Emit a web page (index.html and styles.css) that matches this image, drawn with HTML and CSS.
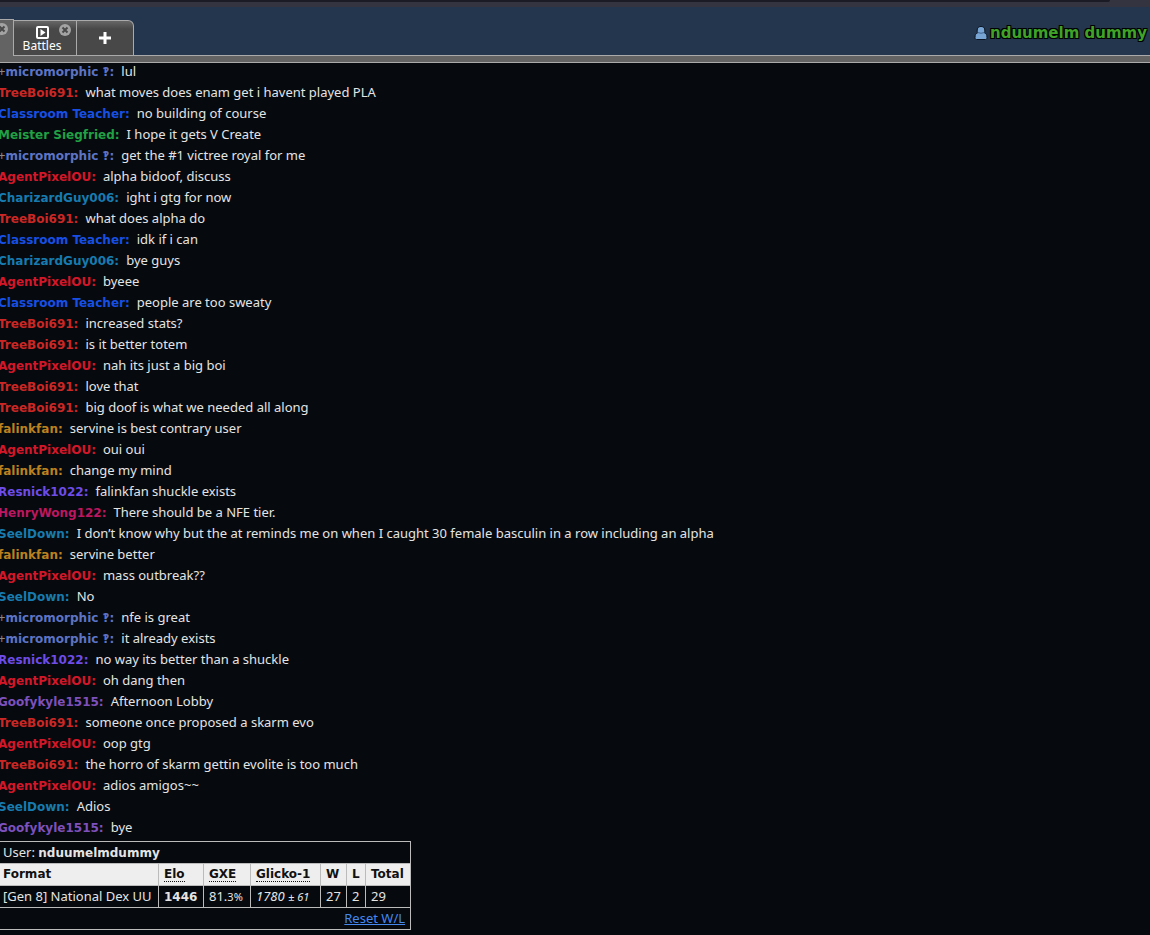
FILE: index.html
```html
<!DOCTYPE html>
<html lang="en">
<head>
<meta charset="utf-8">
<title>Lobby</title>
<link rel="stylesheet" href="styles.css">
</head>
<body>
<div class="browser-edge"></div>
<header class="header">
  <nav class="tabs">
    <div class="tab tab-current">
      <button class="close" aria-label="Close"><svg viewBox="0 0 12 12" width="12" height="12"><circle cx="6" cy="6" r="6" fill="#a3a3a3"/><path d="M3.5 3.5l5 5M8.5 3.5l-5 5" stroke="#494949" stroke-width="2"/></svg></button>
    </div>
    <div class="tab tab-battles">
      <a class="tab-link" href="#battles">
        <svg viewBox="0 0 13 13" width="13" height="13"><rect x="1" y="1" width="11" height="11" rx="1" fill="none" stroke="#fff" stroke-width="2"/><path d="M4.500 3v7l5-3.500z" fill="#fff"/></svg>
        <span>Battles</span>
      </a>
      <button class="close" aria-label="Close Battles"><svg viewBox="0 0 12 12" width="12" height="12"><circle cx="6" cy="6" r="6" fill="#a3a3a3"/><path d="M3.500 3.500l5 5M8.500 3.500l-5 5" stroke="#494949" stroke-width="2"/></svg></button>
    </div>
    <button class="tab tab-add" aria-label="New tab"><svg viewBox="0 0 12 12" width="12" height="12"><path d="M6 0v12M0 6h12" stroke="#fff" stroke-width="3"/></svg></button>
  </nav>
  <a class="user" href="#user">
    <svg viewBox="0 0 14 16" width="14" height="16"><path d="M1 12.500C1 9.500 2 8.500 3.500 8 2.500 3.500 4 1.500 7 1.500S11.500 3.500 10.500 8C12 8.500 13 9.500 13 12.500c0 1.500-.5 2-1.500 2h-9c-1 0-1.500-.5-1.500-2z" fill="#78a4d4" stroke="#0b1420"/><path d="M3.500 7.500q3.500 1.500 7 0" fill="none" stroke="#3f638e"/></svg>
    <span>nduumelm dummy</span>
  </a>
</header>
<main class="log">
  <div class="chat micro"><small>+</small><b>micromorphic ‽:</b><span>lul</span></div>
  <div class="chat tree"><b>TreeBoi691:</b><span>what moves does enam get i havent played PLA</span></div>
  <div class="chat teacher"><b>Classroom Teacher:</b><span>no building of course</span></div>
  <div class="chat meister"><b>Meister Siegfried:</b><span>I hope it gets V Create</span></div>
  <div class="chat micro"><small>+</small><b>micromorphic ‽:</b><span>get the #1 victree royal for me</span></div>
  <div class="chat agent"><b>AgentPixelOU:</b><span>alpha bidoof, discuss</span></div>
  <div class="chat seel"><b>CharizardGuy006:</b><span>ight i gtg for now</span></div>
  <div class="chat tree"><b>TreeBoi691:</b><span>what does alpha do</span></div>
  <div class="chat teacher"><b>Classroom Teacher:</b><span>idk if i can</span></div>
  <div class="chat seel"><b>CharizardGuy006:</b><span>bye guys</span></div>
  <div class="chat agent"><b>AgentPixelOU:</b><span>byeee</span></div>
  <div class="chat teacher"><b>Classroom Teacher:</b><span>people are too sweaty</span></div>
  <div class="chat tree"><b>TreeBoi691:</b><span>increased stats?</span></div>
  <div class="chat tree"><b>TreeBoi691:</b><span>is it better totem</span></div>
  <div class="chat agent"><b>AgentPixelOU:</b><span>nah its just a big boi</span></div>
  <div class="chat tree"><b>TreeBoi691:</b><span>love that</span></div>
  <div class="chat tree"><b>TreeBoi691:</b><span>big doof is what we needed all along</span></div>
  <div class="chat falink"><b>falinkfan:</b><span>servine is best contrary user</span></div>
  <div class="chat agent"><b>AgentPixelOU:</b><span>oui oui</span></div>
  <div class="chat falink"><b>falinkfan:</b><span>change my mind</span></div>
  <div class="chat resnick"><b>Resnick1022:</b><span>falinkfan shuckle exists</span></div>
  <div class="chat henry"><b>HenryWong122:</b><span>There should be a NFE tier.</span></div>
  <div class="chat seel"><b>SeelDown:</b><span>I don’t know why but the at reminds me on when I caught 30 female basculin in a row including an alpha</span></div>
  <div class="chat falink"><b>falinkfan:</b><span>servine better</span></div>
  <div class="chat agent"><b>AgentPixelOU:</b><span>mass outbreak??</span></div>
  <div class="chat seel"><b>SeelDown:</b><span>No</span></div>
  <div class="chat micro"><small>+</small><b>micromorphic ‽:</b><span>nfe is great</span></div>
  <div class="chat micro"><small>+</small><b>micromorphic ‽:</b><span>it already exists</span></div>
  <div class="chat resnick"><b>Resnick1022:</b><span>no way its better than a shuckle</span></div>
  <div class="chat agent"><b>AgentPixelOU:</b><span>oh dang then</span></div>
  <div class="chat goofy"><b>Goofykyle1515:</b><span>Afternoon Lobby</span></div>
  <div class="chat tree"><b>TreeBoi691:</b><span>someone once proposed a skarm evo</span></div>
  <div class="chat agent"><b>AgentPixelOU:</b><span>oop gtg</span></div>
  <div class="chat tree"><b>TreeBoi691:</b><span>the horro of skarm gettin evolite is too much</span></div>
  <div class="chat agent"><b>AgentPixelOU:</b><span>adios amigos~~</span></div>
  <div class="chat seel"><b>SeelDown:</b><span>Adios</span></div>
  <div class="chat goofy"><b>Goofykyle1515:</b><span>bye</span></div>
  <table class="ladder">
    <colgroup><col class="c-format"><col class="c-elo"><col class="c-gxe"><col class="c-glicko"><col class="c-w"><col class="c-l"><col class="c-total"></colgroup>
    <tr><td colspan="7">User: <strong>nduumelmdummy</strong></td></tr>
    <tr><th>Format</th><th><abbr title="Elo rating">Elo</abbr></th><th><abbr title="User's percentage chance of winning a random battle">GXE</abbr></th><th><abbr title="Glicko-1 rating">Glicko-1</abbr></th><th>W</th><th>L</th><th>Total</th></tr>
    <tr><td>[Gen 8] National Dex UU</td><td><strong>1446</strong></td><td>81.<small>3%</small></td><td><em>1780 <small>± 61</small></em></td><td>27</td><td>2</td><td>29</td></tr>
    <tr><td class="reset" colspan="7"><a href="#reset">Reset W/L</a></td></tr>
  </table>
</main>
</body>
</html>
```
FILE: styles.css
```css
*, *::before, *::after { box-sizing: border-box; }
body {
  margin: 0;
  min-height: 100vh;
  overflow: hidden;
  background: #060a0e;
  color: #e4e4e4;
  font: 13px/21px Tahoma, "Noto Sans", sans-serif;
}
button { border: 0; padding: 0; background: none; }
svg { display: block; }
.browser-edge {
  height: 7px;
  background: #33343f;
}
.browser-edge::before {
  content: "";
  display: block;
  height: 2px;
  margin-right: 40px;
  background: #1a1b25;
  border-bottom-right-radius: 2px;
}
.header {
  position: relative;
  z-index: 1;
  display: flex;
  justify-content: space-between;
  height: 56px;
  padding-top: 12px;
  background: #24364d;
}
.header::after {
  content: "";
  position: absolute;
  inset: auto 0 0;
  height: 8px;
  background: #636363;
  border: solid #aaa;
  border-width: 1px 0;
}
.tabs { display: flex; }
.tab {
  position: relative;
  height: 36px;
  margin-top: 1px;
  border: 1px solid #aaa;
  border-left: 0;
  background: linear-gradient(#666, #484848 8px);
}
.tab-current {
  z-index: 1;
  width: 14px;
  height: 37px;
  margin-top: 0;
  background: #636363;
  border-bottom: 0;
}
.tab-battles { width: 63px; }
.tab-add {
  display: grid;
  place-items: center;
  width: 57px;
  border-top-right-radius: 6px;
}
.close { position: absolute; top: 3px; right: 5px; }
.tab-link {
  display: flex;
  flex-direction: column;
  align-items: center;
  padding: 5px 6px 0 0;
  color: #fff;
  font-size: 12px;
  line-height: 14px;
  text-decoration: none;
}
.user {
  display: flex;
  gap: 2px;
  padding: 6px 3px 0 0;
  color: #3fa328;
  font: bold 15px/17px Verdana, "DejaVu Sans", sans-serif;
  text-decoration: none;
  text-shadow: 1px 1px #000, -1px -1px #000, 1px -1px #000, -1px 1px #000;
}
.log { margin: -2px 0 0 -3px; }
.chat { height: 21px; padding-left: 1px; }
.chat b { margin-right: 7px; color: var(--name); }
.chat small { color: #888; font-size: 13px; }
.chat b, .ladder strong, .ladder th { font: bold 12px/17px Verdana, "DejaVu Sans", sans-serif; }
.micro { --name: #5d73c4; }
.tree { --name: #cc2725; }
.teacher { --name: #174fe5; }
.meister { --name: #20a144; }
.agent { --name: #d41629; }
.seel { --name: #177bb0; }
.falink { --name: #bd801f; }
.resnick { --name: #6d4ce8; }
.henry { --name: #bd1760; }
.goofy { --name: #7e50bc; }
.ladder {
  width: 414px;
  margin-top: 3px;
  table-layout: fixed;
  border-collapse: collapse;
  line-height: 17px;
}
.ladder tr { height: 22px; }
.ladder td, .ladder th {
  padding: 1px 5px;
  border: 1px solid #bbb;
  text-align: left;
  white-space: nowrap;
}
.ladder th { background: #eee; color: #111; }
.ladder small { font-size: 11px; line-height: 1; }
.ladder abbr { text-decoration: none; border-bottom: 1px dotted #111; }
.ladder .reset { text-align: right; }
.ladder a { color: #4488f0; }
.c-format { width: 161px; }
.c-elo { width: 45px; }
.c-gxe { width: 47px; }
.c-glicko { width: 70px; }
.c-w { width: 26px; }
.c-l { width: 19px; }
.c-total { width: 45px; }
```
